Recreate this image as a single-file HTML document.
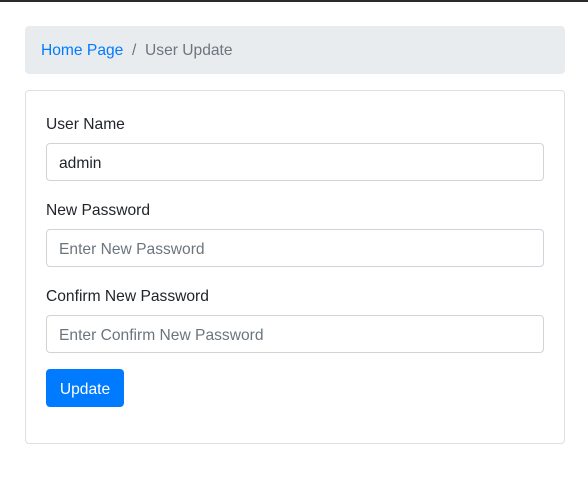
<!DOCTYPE html>
<html><head><style>
*{box-sizing:border-box;margin:0;padding:0}
body{width:588px;height:502px;background:#fff;font-family:"Liberation Sans",sans-serif;font-size:15.6px;color:#212529;position:relative;overflow:hidden}
.top{position:absolute;left:0;top:0;width:588px;height:2px;background:#2b2b2b}
.bc{position:absolute;left:25px;top:26px;width:540px;height:48px;background:#e9ecef;border-radius:4px;padding:0 16px;line-height:50px}
.bc a{color:#007bff;text-decoration:none}
.bc span{color:#6c757d}
.card{position:absolute;left:25px;top:90px;width:540px;height:354px;border:1px solid #dfdfdf;border-radius:4px}
.lbl{position:absolute;left:20px}
.inp{position:absolute;left:20px;width:498px;height:38px;border:1px solid #ced4da;border-radius:4px;padding:0 12px;line-height:38px;padding-top:1px}
.ph{color:#6c757d}
.btn{position:absolute;left:20px;top:278px;width:78px;height:38px;background:#007bff;color:#fff;border-radius:4px;text-align:center;line-height:41px}
</style></head><body>
<div class="top"></div>
<div class="bc"><a>Home Page</a><span>&nbsp; / &nbsp;User Update</span></div>
<div class="card">
<div class="lbl" style="top:25px">User Name</div>
<div class="inp" style="top:52px">admin</div>
<div class="lbl" style="top:111px">New Password</div>
<div class="inp ph" style="top:138px">Enter New Password</div>
<div class="lbl" style="top:197px">Confirm New Password</div>
<div class="inp ph" style="top:224px">Enter Confirm New Password</div>
<div class="btn">Update</div>
</div>
</body></html>
